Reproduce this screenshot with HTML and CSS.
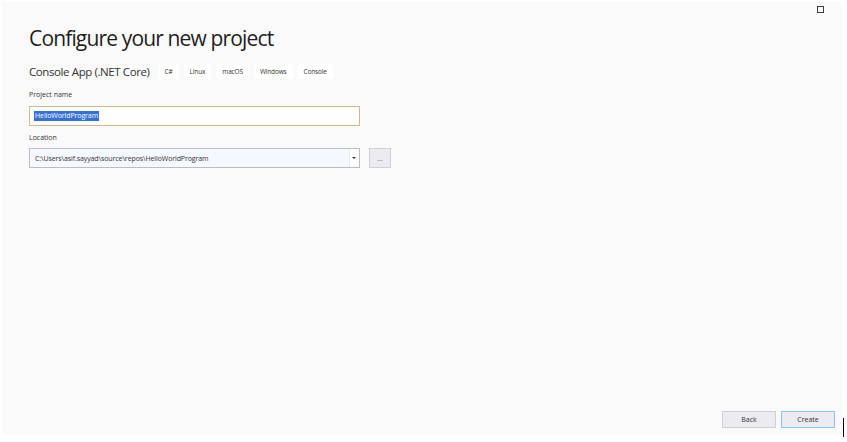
FILE: index.html
```html
<!DOCTYPE html>
<html lang="en">
<head>
<meta charset="utf-8">
<title>Configure your new project</title>
<link rel="stylesheet" href="styles.css">
</head>
<body>
<div class="window">
  <div class="titlebar">
    <span class="restore"></span>
  </div>
  <div class="content">
    <h1 class="title">Configure your new project</h1>
    <div class="subtitle-row">
      <span class="subtitle">Console App (.NET Core)</span>
      <span class="tag">C#</span>
      <span class="tag">Linux</span>
      <span class="tag">macOS</span>
      <span class="tag">Windows</span>
      <span class="tag">Console</span>
    </div>
    <label class="label">Project name</label>
    <div class="input name-input"><span class="selected">HelloWorldProgram</span></div>
    <label class="label loc-label">Location</label>
    <div class="loc-row">
      <div class="input select">
        <span class="select-text">C:\Users\asif.sayyad\source\repos\HelloWorldProgram</span>
        <span class="arrow"></span>
      </div>
      <div class="browse">...</div>
    </div>
  </div>
  <div class="footer">
    <div class="btn">Back</div>
    <div class="btn primary">Create</div>
  </div>
</div>
<div class="cursor"></div>
</body>
</html>
```
FILE: styles.css
```css
html, body {
  margin: 0;
  padding: 0;
  background: #ffffff;
  width: 847px;
  height: 442px;
  overflow: hidden;
  font-family: "Open Sans", "Noto Sans", sans-serif;
  color: #1e1e1e;
}
body {
  position: relative;
}
.window {
  margin: 2px 0 0 2px;
  width: 840px;
  height: 433px;
  background: #fafafa;
  display: flex;
  flex-direction: column;
}
.titlebar {
  height: 20px;
  display: flex;
  justify-content: flex-end;
  padding-right: 18px;
}
.restore {
  margin-top: 4px;
  width: 5px;
  height: 5px;
  border: 1px solid #3c3c46;
}
.content {
  padding-left: 27px;
  flex: 1;
}
.title {
  margin: 1px 0 0 0;
  font-weight: 400;
  font-size: 21px;
  line-height: 30px;
  letter-spacing: -0.85px;
  color: #1e1e1e;
}
.subtitle-row {
  margin-top: 10px;
  display: flex;
  align-items: center;
  height: 16px;
}
.subtitle {
  font-size: 11.5px;
  letter-spacing: -0.4px;
  color: #333;
  margin-right: 9px;
}
.tag {
  background: #ffffff;
  font-size: 6.5px;
  letter-spacing: -0.15px;
  padding: 0 6px;
  height: 15px;
  line-height: 15px;
  margin-right: 5px;
  color: #333;
  border-radius: 2px;
}
.label {
  display: block;
  font-size: 7px;
  color: #333;
  margin-top: 10px;
  height: 12px;
  line-height: 12px;
}
.input {
  box-sizing: border-box;
  width: 331px;
  height: 20px;
  margin-top: 5px;
  display: flex;
  align-items: center;
  padding-left: 4px;
  font-size: 7px;
  letter-spacing: -0.1px;
}
.name-input {
  background: #fefefe;
  border: 1px solid #cdbb8b;
}
.selected {
  background: #3470d6;
  color: #fff;
  padding: 0 1px;
  line-height: 10px;
}
.loc-label {
  margin-top: 6px;
}
.loc-row {
  display: flex;
  align-items: flex-start;
}
.loc-row .select {
  margin-top: 4px;
}
.select {
  background: #f5f8fe;
  border: 1px solid #b9bcc4;
  justify-content: space-between;
  padding-left: 5px;
  padding-right: 0;
}
.select-text {
  color: #333;
}
.arrow {
  width: 9px;
  height: 18px;
  background: #ffffff;
  border-left: 1px solid #e8e8ee;
  position: relative;
}
.arrow::after {
  content: "";
  position: absolute;
  left: 2px;
  top: 8px;
  border-left: 2px solid transparent;
  border-right: 2px solid transparent;
  border-top: 2px solid #333;
}
.browse {
  box-sizing: border-box;
  margin-left: 9px;
  margin-top: 4px;
  width: 22px;
  height: 20px;
  background: #ececf0;
  border: 1px solid #cfcfd6;
  font-size: 7px;
  color: #555;
  display: flex;
  align-items: center;
  justify-content: center;
  line-height: 1;
}
.footer {
  display: flex;
  justify-content: flex-end;
  gap: 5px;
  padding: 0 7px 7px 0;
}
.btn {
  box-sizing: border-box;
  width: 54px;
  height: 17px;
  background: #ececf0;
  border: 1px solid #cccedb;
  font-size: 7px;
  color: #333;
  display: flex;
  align-items: center;
  justify-content: center;
}
.btn.primary {
  border-color: #90c0f0;
}
.cursor {
  position: absolute;
  left: 843px;
  top: 418px;
  width: 1px;
  height: 19px;
  background: #000;
}
```
